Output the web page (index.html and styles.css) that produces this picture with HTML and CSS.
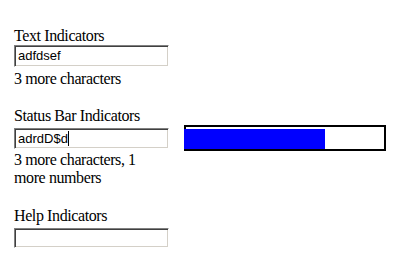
FILE: index.html
```html
<!DOCTYPE html>
<html>
<head>
<meta charset="utf-8">
<link rel="stylesheet" href="styles.css">
</head>
<body>
<div class="page">
  <div class="section first">
    <div class="label">Text Indicators</div>
    <div class="field">adfdsef</div>
    <div class="note note-tight">3 more characters</div>
  </div>
  <div class="section second">
    <div class="label">Status Bar Indicators</div>
    <div class="row">
      <div class="field field-mid">adrdD$d<span class="caret"></span></div>
      <div class="bar"><div class="fill" style="width:141px"></div></div>
    </div>
    <div class="note note-wrap">3 more characters, 1 more numbers</div>
  </div>
  <div class="section third">
    <div class="label">Help Indicators</div>
    <div class="field field-short"></div>
  </div>
</div>
</body>
</html>
```
FILE: styles.css
```css
html, body {
  margin: 0;
  padding: 0;
  background: #fff;
}
.page {
  padding: 26px 0 0 14px;
  font-family: "Liberation Serif", "Times New Roman", serif;
  font-size: 16px;
  letter-spacing: -0.4px;
  color: #000;
}
.label {
  line-height: 19px;
}
.second {
  margin-top: 18px;
}
.third {
  margin-top: 19px;
}
.field {
  box-sizing: border-box;
  width: 155px;
  height: 22px;
  border-style: solid;
  border-width: 1px;
  border-color: #808080 #ffffff #ffffff #808080;
  box-shadow: inset 1px 1px 0 #404040, inset -1px -1px 0 #d4d0c8;
  padding: 2px 2px 0 3px;
  font-family: "Liberation Sans", Arial, sans-serif;
  font-size: 13px;
  letter-spacing: 0;
  line-height: 16px;
  white-space: nowrap;
  overflow: hidden;
}
.field-mid {
  height: 21px;
  margin-top: 3px;
}
.field-short {
  height: 20px;
  margin-top: 3px;
}
.caret {
  display: inline-block;
  width: 1px;
  height: 15px;
  background: #000;
  vertical-align: -3px;
}
.note {
  line-height: 18px;
}
.note-tight {
  margin-top: 2px;
  line-height: 19px;
}
.note-wrap {
  width: 155px;
}
.row {
  display: flex;
  align-items: flex-start;
}
.bar {
  box-sizing: border-box;
  width: 202px;
  height: 26px;
  margin-left: 15px;
  border: 2px solid #000;
}
.fill {
  height: 20px;
  margin-top: 2px;
  margin-left: -2px;
  background: #0000ff;
}
```
